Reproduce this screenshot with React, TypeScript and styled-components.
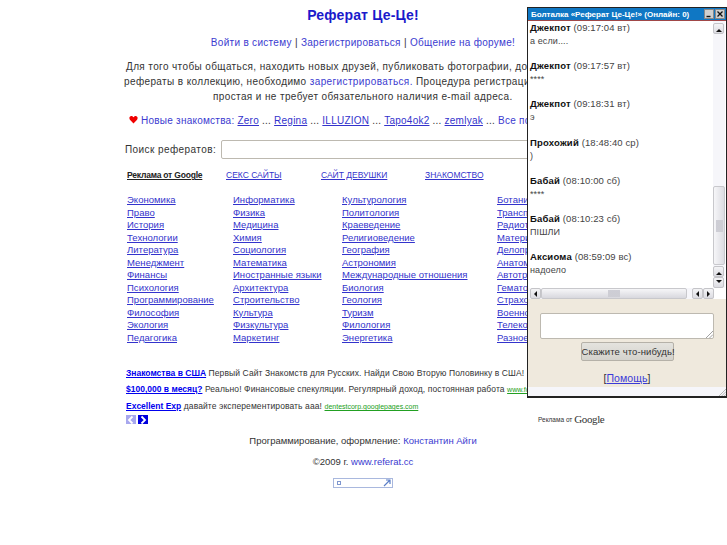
import styled, { createGlobalStyle } from "styled-components";

const GlobalStyle = createGlobalStyle`
  html, body {
    margin: 0;
    padding: 0;
    background: #fff;
    overflow: hidden;
    font-family: "Liberation Sans", Arial, sans-serif;
    color: #333;
  }
`;

const columns = [
  { width: 106, items: ["Экономика", "Право", "История", "Технологии", "Литература", "Менеджмент", "Финансы", "Психология", "Программирование", "Философия", "Экология", "Педагогика"] },
  { width: 109, items: ["Информатика", "Физика", "Медицина", "Химия", "Социология", "Математика", "Иностранные языки", "Архитектура", "Строительство", "Культура", "Физкультура", "Маркетинг"] },
  { width: 155, items: ["Культурология", "Политология", "Краеведение", "Религиоведение", "География", "Астрономия", "Международные отношения", "Биология", "Геология", "Туризм", "Филология", "Энергетика"] },
  { width: 155, items: ["Ботаника", "Транспорт", "Радиотехника", "Материаловедение", "Делопроизводство", "Анатомия", "Автотранспорт", "Гематология", "Страхование", "Военное дело", "Телекоммуникации", "Разное"] },
];

const chat = [
  { who: "Джекпот", time: "(09:17:04 вт)", text: "а если...." },
  { who: "Джекпот", time: "(09:17:57 вт)", text: "****" },
  { who: "Джекпот", time: "(09:18:31 вт)", text: "э" },
  { who: "Прохожий", time: "(18:48:40 ср)", text: ")" },
  { who: "Бабай", time: "(08:10:00 сб)", text: "****" },
  { who: "Бабай", time: "(08:10:23 сб)", text: "ПІШЛИ" },
  { who: "Аксиома", time: "(08:59:09 вс)", text: "надоело" },
];

export default function App() {
  return (
    <>
      <GlobalStyle />
      <Page>
        <Title>Реферат Це-Це!</Title>
        <Nav>
          <PlainLink>Войти в систему</PlainLink> | <PlainLink>Зарегистрироваться</PlainLink> | <PlainLink>Общение на форуме!</PlainLink>
        </Nav>
        <Intro>
          <IntroLine $indent={4}>Для того чтобы общаться, находить новых друзей, публиковать фотографии, добавлять</IntroLine>
          <IntroLine $indent={2}>рефераты в коллекцию, необходимо <PlainLink>зарегистрироваться.</PlainLink> Процедура регистрации очень</IntroLine>
          <IntroLine $indent={91}>простая и не требует обязательного наличия e-mail адреса.</IntroLine>
        </Intro>
        <Newcomers>
          <Heart viewBox="0 0 10 10"><path d="M5 9.500 1 5.200C-.2 3.600.5 1 2.600 1 3.800 1 4.600 1.800 5 2.600 5.400 1.800 6.200 1 7.400 1c2.100 0 2.800 2.600 1.600 4.200z" /></Heart>
          <PlainLink> Новые знакомства:</PlainLink> <a>Zero</a> ... <a>Regina</a> ... <a>ILLUZION</a> ... <a>Tapo4ok2</a> ... <a>zemlyak</a> ... <PlainLink>Все пользователи</PlainLink>
        </Newcomers>
        <SearchRow>
          <SearchLabel>Поиск рефератов:</SearchLabel>
          <SearchInput />
        </SearchRow>
        <AdLinks>
          <AdByline>Реклама от Google</AdByline>
          <AdTopic $width={95}>СЕКС САЙТЫ</AdTopic>
          <AdTopic $width={104}>САЙТ ДЕВУШКИ</AdTopic>
          <AdTopic $width={100}>ЗНАКОМСТВО</AdTopic>
        </AdLinks>
        <Catalog>
          {columns.map((col) => (
            <CatalogColumn key={col.items[0]} $width={col.width}>
              {col.items.map((item) => (
                <CatalogLink key={item}>{item}</CatalogLink>
              ))}
            </CatalogColumn>
          ))}
        </Catalog>
        <Ads>
          <AdRow><AdTitle>Знакомства в США</AdTitle> Первый Сайт Знакомств для Русских. Найди Свою Вторую Половинку в США!</AdRow>
          <AdRow><AdTitle>$100,000 в месяц?</AdTitle> Реально! Финансовые спекуляции. Регулярный доход, постоянная работа <AdUrl>www.forex-trading.ru</AdUrl></AdRow>
          <AdRow><AdTitle>Excellent Exp</AdTitle> давайте эксперементировать ааа! <AdUrl>dentestcorp.googlepages.com</AdUrl></AdRow>
          <Pager>
            <PagerButton $active={false}><svg viewBox="0 0 10 10" width="10" height="10"><path d="M6.500 1.500 3 5l3.500 3.500" fill="none" stroke="#fff" strokeWidth="1.800" /></svg></PagerButton>
            <PagerButton $active><svg viewBox="0 0 10 10" width="10" height="10"><path d="M3.500 1.500 7 5 3.500 8.500" fill="none" stroke="#fff" strokeWidth="1.800" /></svg></PagerButton>
          </Pager>
        </Ads>
        <Footer>Программирование, оформление: <PlainLink>Константин Айги</PlainLink></Footer>
        <Footer>©2009 г. <PlainLink>www.referat.cc</PlainLink></Footer>
        <CounterRow>
          <Counter>
            <CounterDot />
            <svg viewBox="0 0 8 8" width="8" height="8"><path d="M1 7 7 1M3 1h4v4" fill="none" stroke="#5b7fc7" strokeWidth="1.200" /></svg>
          </Counter>
        </CounterRow>
      </Page>

      <ChatWindow>
        <ChatTitleBar>
          <span>Болталка «Реферат Це-Це!» (Онлайн: 0)</span>
          <WindowButtons>
            <WindowButton>
              <svg viewBox="0 0 8 8" width="8" height="8"><path d="M1.500 6.500h4" stroke="#111" strokeWidth="1.400" /></svg>
            </WindowButton>
            <WindowButton>
              <svg viewBox="0 0 8 8" width="8" height="8"><path d="m1.500 1.500 5 5m0-5-5 5" stroke="#111" strokeWidth="1.300" /></svg>
            </WindowButton>
          </WindowButtons>
        </ChatTitleBar>
        <ChatLog>
          <ChatMessages>
            {chat.map((m, i) => (
              <Message key={i}>
                <div><Who>{m.who}</Who> {m.time}</div>
                <MessageText>{m.text}</MessageText>
              </Message>
            ))}
          </ChatMessages>
          <VScroll>
            <ScrollButton><Arrow $dir="up" /></ScrollButton>
            <VTrack><VThumb><Grip $w={7} $h={12} /></VThumb></VTrack>
            <ScrollButton><Arrow $dir="up" /></ScrollButton>
            <ScrollButton><Arrow $dir="down" /></ScrollButton>
          </VScroll>
        </ChatLog>
        <HScrollRow>
          <HScroll>
            <ScrollButton><Arrow $dir="left" /></ScrollButton>
            <HThumb><Grip $w={12} $h={7} /></HThumb>
            <HGap />
            <ScrollButton><Arrow $dir="left" /></ScrollButton>
            <ScrollButton><Arrow $dir="right" /></ScrollButton>
          </HScroll>
          <ScrollCorner />
        </HScrollRow>
        <ChatForm>
          <ChatInput><ResizeGrip viewBox="0 0 6 6"><path d="M0 6 6 0M3 6l3-3" /></ResizeGrip></ChatInput>
          <ChatSend>Скажите что-нибудь!</ChatSend>
          <HelpLine>[<a>Помощь</a>]</HelpLine>
        </ChatForm>
        <StatusBar><ResizeGrip viewBox="0 0 8 8"><path d="M0 8 8 0M3 8l5-5M6 8l2-2" /></ResizeGrip></StatusBar>
      </ChatWindow>

      <GoogleMark>
        <small>Реклама от</small> <GoogleWord>Google</GoogleWord>
      </GoogleMark>
    </>
  );
}

const Page = styled.div`
  width: 482px;
  margin-left: 122px;
  padding-top: 6px;
  font-size: 10px;
  text-align: center;
  white-space: nowrap;
  letter-spacing: 0.3px;

  a {
    color: #3333cc;
    text-decoration: underline;
  }
`;

const Title = styled.h1`
  margin: 0;
  font-size: 14px;
  line-height: 18px;
  font-weight: bold;
  letter-spacing: 0.15px;
  color: #1a1acb;
`;

const Nav = styled.div`
  margin-top: 10px;
  line-height: 18px;
`;

const PlainLink = styled.span`
  color: #3b3bd0;
`;

const Intro = styled.div`
  margin-top: 7px;
  line-height: 15px;
  text-align: left;
  letter-spacing: 0.38px;
`;

const IntroLine = styled.div<{ $indent: number }>`
  padding-left: ${(p) => p.$indent}px;
`;

const Newcomers = styled.div`
  margin-top: 8px;
  line-height: 18px;
  padding-left: 7px;
  text-align: left;
  letter-spacing: 0.24px;
`;

const Heart = styled.svg`
  width: 9px;
  height: 9px;
  fill: #f00000;
`;

const SearchRow = styled.div`
  display: flex;
  align-items: center;
  margin-top: 10px;
  gap: 5px;
  padding-left: 3px;
`;

const SearchLabel = styled.span`
  letter-spacing: 0.42px;
`;

const SearchInput = styled.div`
  flex: 0 0 400px;
  height: 17px;
  background: #fff;
  border: 1px solid #bdb9b0;
  border-radius: 2px;
`;

const AdLinks = styled.div`
  display: flex;
  margin-top: 10px;
  padding-left: 5px;
  height: 12px;
  align-items: center;
  font-size: 8.5px;
  letter-spacing: 0;
`;

const AdByline = styled.span`
  flex: 0 0 99px;
  text-align: left;
  font-weight: bold;
  color: #222;
  text-decoration: underline;
  letter-spacing: -0.2px;
`;

const AdTopic = styled.a<{ $width: number }>`
  flex: 0 0 ${(p) => p.$width}px;
  text-align: left;
`;

const Catalog = styled.div`
  display: flex;
  margin-top: 13px;
  margin-left: 5px;
  text-align: left;
  font-size: 9.5px;
  letter-spacing: 0.03px;
`;

const CatalogColumn = styled.div<{ $width: number }>`
  flex: 0 0 ${(p) => p.$width}px;
  display: flex;
  flex-direction: column;
  align-items: flex-start;
`;

const CatalogLink = styled.a`
  line-height: 12.5px;
`;

const Ads = styled.div`
  margin-top: 21px;
  margin-left: 4px;
  text-align: left;
  font-size: 8.5px;
  letter-spacing: 0.1px;
`;

const AdRow = styled.div`
  line-height: 16px;
  color: #333;
`;

const AdTitle = styled.a`
  && {
    color: #0000ee;
    font-weight: bold;
    letter-spacing: 0;
  }
`;

const AdUrl = styled.a`
  && {
    color: #22a022;
    font-size: 7px;
    letter-spacing: 0;
  }
`;

const Pager = styled.div`
  display: flex;
  gap: 2px;
`;

const PagerButton = styled.div<{ $active: boolean }>`
  width: 10px;
  height: 9px;
  display: flex;
  align-items: center;
  justify-content: center;
  background: ${(p) => (p.$active ? "#0000dd" : "#a8a8ee")};
`;

const Footer = styled.div`
  margin-top: 9px;
  line-height: 15px;
  font-size: 9.5px;
  letter-spacing: 0;
  & + & {
    margin-top: 6px;
  }
`;

const CounterRow = styled.div`
  display: flex;
  justify-content: center;
  margin-top: 9px;
`;

const Counter = styled.div`
  width: 54px;
  height: 8px;
  border: 1px solid #a9b8de;
  display: flex;
  align-items: center;
  justify-content: space-between;
  padding: 0 1px 0 3px;
`;

const CounterDot = styled.span`
  width: 2px;
  height: 2px;
  border: 1px solid #7f97cf;
`;

const ChatWindow = styled.div`
  position: absolute;
  left: 527px;
  top: 7px;
  width: 198px;
  height: 388px;
  border: 1px solid #222;
  border-width: 1px 2px 2px 1px;
  background: #efe9dd;
  display: flex;
  flex-direction: column;
  font-size: 9.5px;
  letter-spacing: 0.1px;
`;

const ChatTitleBar = styled.div`
  flex: 0 0 12px;
  display: flex;
  align-items: center;
  justify-content: space-between;
  padding: 0 1px 0 3px;
  background: #0f77c4;
  border-bottom: 1px solid #a04848;
  color: #fff;
  font-size: 8px;
  font-weight: bold;
  white-space: nowrap;
  letter-spacing: 0;
`;

const WindowButtons = styled.div`
  display: flex;
  gap: 1px;
`;

const WindowButton = styled.div`
  width: 8px;
  height: 8px;
  display: flex;
  background: #cfcfcf;
  border: 1px solid #888;
`;

const ChatLog = styled.div`
  display: flex;
  height: 267px;
  background: #fff;
`;

const ChatMessages = styled.div`
  flex: 1;
  padding: 0 0 0 2px;
  overflow: hidden;
  color: #444;
`;

const Message = styled.div`
  height: 38.2px;
  line-height: 13px;
`;

const Who = styled.b`
  color: #111;
  letter-spacing: 0.2px;
`;

const MessageText = styled.div`
  margin-top: 1px;
  font-size: 9px;
`;

const VScroll = styled.div`
  flex: 0 0 12px;
  display: flex;
  flex-direction: column;
  margin-right: 1px;
  padding-top: 2px;
  background: #f6f6fa;
`;

const ScrollButton = styled.div`
  flex: 0 0 11px;
  width: 11px;
  height: 11px;
  box-sizing: border-box;
  display: flex;
  align-items: center;
  justify-content: center;
  border: 1px solid #c4c4c8;
  border-radius: 2px;
  background: linear-gradient(180deg, #f4f4f6, #dcdce2);
`;

const Arrow = styled.span<{ $dir: "up" | "down" | "left" | "right" }>`
  width: 0;
  height: 0;
  border: 3px solid transparent;
  ${(p) => `border-${{ up: "bottom", down: "top", left: "right", right: "left" }[p.$dir]}-color: #111;`}
  ${(p) => `border-${p.$dir}-width: 0;`}
`;

const VTrack = styled.div`
  flex: 1;
  display: flex;
  flex-direction: column;
  justify-content: flex-end;
`;

const VThumb = styled.div`
  height: 77px;
  margin-bottom: 1px;
  display: flex;
  align-items: center;
  justify-content: center;
  border: 1px solid #c8c8cc;
  border-radius: 2px;
  background: linear-gradient(90deg, #f6f6f8, #dcdce2);
`;

const Grip = styled.span<{ $w: number; $h: number }>`
  width: ${(p) => p.$w}px;
  height: ${(p) => p.$h}px;
  background: radial-gradient(circle at 1px 1px, #cdcdd4 0.7px, transparent 0.9px) 0 0 / 2px 2px;
`;

const HScrollRow = styled.div`
  display: flex;
  height: 11px;
  background: #fff;
`;

const HScroll = styled.div`
  flex: 1;
  display: flex;
  padding-left: 2px;
  background: #f6f6fa;
`;

const HThumb = styled.div`
  flex: 0 0 146px;
  height: 11px;
  box-sizing: border-box;
  display: flex;
  align-items: center;
  justify-content: center;
  border: 1px solid #c8c8cc;
  border-radius: 2px;
  background: linear-gradient(180deg, #f6f6f8, #d8d8de);
`;

const HGap = styled.div`
  flex: 1;
`;

const ScrollCorner = styled.div`
  flex: 0 0 12px;
`;

const ChatForm = styled.div`
  flex: 1;
  display: flex;
  flex-direction: column;
  align-items: center;
  padding-top: 14px;
`;

const ChatInput = styled.div`
  width: 172px;
  height: 24px;
  position: relative;
  background: #fff;
  border: 1px solid #bdb9b0;
  border-radius: 2px;
`;

const ResizeGrip = styled.svg`
  position: absolute;
  right: 0;
  bottom: 0;
  width: 7px;
  height: 7px;
  fill: none;
  stroke: #9a9a9a;
  stroke-width: 0.800;
`;

const ChatSend = styled.div`
  margin-top: 3px;
  width: 93px;
  height: 19px;
  box-sizing: border-box;
  border: 1px solid #b5b1a8;
  border-radius: 2px;
  background: linear-gradient(180deg, #e4e3de, #d4d2cc);
  color: #333;
  font-size: 9.5px;
  line-height: 17px;
  text-align: center;
  white-space: nowrap;
`;

const HelpLine = styled.div`
  margin-top: 10px;
  font-size: 10.5px;
  line-height: 14px;
  color: #333;

  a {
    color: #3a3ad8;
    text-decoration: underline;
  }
`;

const StatusBar = styled.div`
  flex: 0 0 9px;
  position: relative;
  background: #f6f6fa;
`;

const GoogleMark = styled.div`
  position: absolute;
  left: 538px;
  top: 413px;
  display: flex;
  align-items: center;
  gap: 2px;
  color: #333;

  small {
    font-size: 6.500px;
    font-family: "Liberation Sans", sans-serif;
  }
`;

const GoogleWord = styled.span`
  font-family: "Liberation Serif", serif;
  font-size: 11px;
  letter-spacing: -0.4px;
`;
